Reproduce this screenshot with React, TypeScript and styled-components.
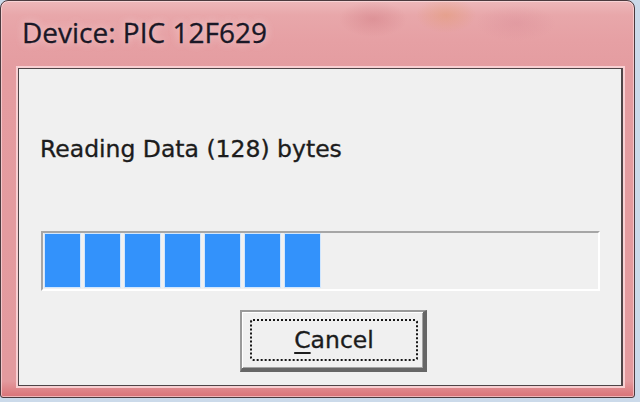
import React from "react";
import styled, { createGlobalStyle } from "styled-components";

const GlobalStyle = createGlobalStyle`
  html, body {
    margin: 0;
    padding: 0;
    width: 640px;
    height: 402px;
    overflow: hidden;
    background: #cbdaea;
  }
  * { box-sizing: border-box; }
`;

const Window = styled.div`
  width: 635px;
  height: 398px;
  display: flex;
  flex-direction: column;
  padding: 0 11px 11px 17px;
  border: 1px solid #4b3a3e;
  border-radius: 8px 8px 3px 3px;
  background:
    radial-gradient(ellipse 34px 18px at 372px 18px, rgba(190, 90, 100, 0.25), transparent),
    radial-gradient(ellipse 30px 18px at 445px 14px, rgba(225, 150, 90, 0.35), transparent),
    radial-gradient(ellipse 40px 18px at 515px 22px, rgba(200, 110, 130, 0.18), transparent),
    linear-gradient(180deg, #edb8ba 0px, #e8a7aa 14px, #e6a0a4 40px, #e49ca0 70px, #e39a9e 380px, #dc7c80 392px, #d56f74 398px);
  box-shadow: inset 0 0 0 1px rgba(255, 235, 236, 0.55);
`;

const TitleBar = styled.div`
  height: 67px;
  flex: 0 0 67px;
  padding: 12px 0 0 4px;
  font-family: "Open Sans", "Noto Sans", sans-serif;
  font-size: 28px;
  line-height: 38px;
  color: #1a1826;
  -webkit-text-stroke: 0.3px #1a1826;
  text-shadow: 0 0 9px rgba(255, 240, 240, 0.7);
  white-space: nowrap;
`;

const Client = styled.div`
  flex: 1;
  display: flex;
  flex-direction: column;
  align-items: flex-start;
  padding: 66px 0 0 22px;
  background: #f0f0f0;
  border: 1px solid #4f4547;
  border-right-width: 2px;
  box-shadow: 0 0 0 2px rgba(250, 214, 216, 0.9);
  font-family: "DejaVu Sans", "Liberation Sans", sans-serif;
  font-size: 23.5px;
  color: #1c1c1c;
  -webkit-text-stroke: 0.35px #1c1c1c;
`;

const Message = styled.div`
  line-height: 28px;
  margin-left: -1px;
  white-space: nowrap;
`;

const ProgressTrack = styled.div`
  margin-top: 68px;
  width: 559px;
  height: 60px;
  display: flex;
  gap: 5px;
  padding: 1px 2px 2px 2px;
  border-style: solid;
  border-width: 2px;
  border-color: #a6a6a6 #ffffff #ffffff #a6a6a6;
  background: #f0f0f0;
`;

const Block = styled.div`
  width: 35px;
  flex: 0 0 35px;
  background: #3392fb;
  box-shadow: 0 0 0 1px rgba(204, 228, 255, 0.9);
`;

const CancelButton = styled.button`
  margin-top: 19px;
  margin-left: 199px;
  width: 187px;
  height: 62px;
  display: flex;
  padding: 7px 5px 7px 8px;
  background: #f0f0f0;
  border-style: solid;
  border-width: 2px 4px 4px 2px;
  border-color: #9a9a9a #666666 #666666 #9a9a9a;
  box-shadow: inset 1px 1px 0 #ffffff, inset -1px -1px 0 #a3a3a3;
  font-family: inherit;
  font-size: inherit;
  color: inherit;
  -webkit-text-stroke: inherit;
  cursor: default;
`;

const FocusRect = styled.span`
  flex: 1;
  display: flex;
  align-items: center;
  justify-content: center;
  border: 2px dotted #161616;
  border-radius: 3px;
  line-height: 28px;
  padding-bottom: 1px;
`;

const Mnemonic = styled.span`
  text-decoration: underline;
  text-decoration-thickness: 2px;
  text-underline-offset: 4px;
`;

export default function App() {
  const filled = 7;
  return (
    <>
      <GlobalStyle />
      <Window>
        <TitleBar>Device: PIC 12F629</TitleBar>
        <Client>
          <Message>Reading Data (128) bytes</Message>
          <ProgressTrack>
            {Array.from({ length: filled }, (_, i) => (
              <Block key={i} />
            ))}
          </ProgressTrack>
          <CancelButton type="button">
            <FocusRect>
              <Mnemonic>C</Mnemonic>ancel
            </FocusRect>
          </CancelButton>
        </Client>
      </Window>
    </>
  );
}
